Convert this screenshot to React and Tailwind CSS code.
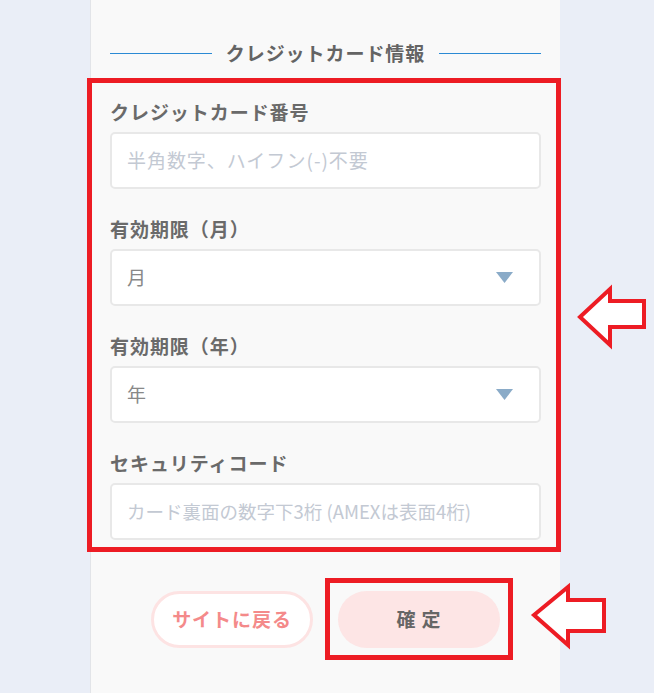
import React from "react";

const font = "font-['Noto_Sans_CJK_JP','Liberation_Sans',sans-serif]";

function Caret() {
  return (
    <svg width="17" height="11" viewBox="0 0 17 11">
      <polygon points="0,0 17,0 8.5,11" fill="#8aabc8" />
    </svg>
  );
}

function Field({ label, children }) {
  return (
    <div>
      <div className="text-[19px] leading-[24px] font-bold tracking-[0.05em] text-[#6a6a6a]">{label}</div>
      <div className="mt-2">{children}</div>
    </div>
  );
}

function TextBox({ placeholder, tight }) {
  return (
    <div className="h-[57px] bg-white border-2 border-[#e8e8e8] rounded-[5px] flex items-center pl-[15px]">
      <span className={`whitespace-nowrap text-[#c3c9d3] ${tight ? "text-[18.5px]" : "text-[19px] tracking-[0.05em]"}`}>
        {placeholder}
      </span>
    </div>
  );
}

function SelectBox({ value }) {
  return (
    <div className="h-[57px] bg-white border-2 border-[#e8e8e8] rounded-[5px] flex items-center justify-between pl-[15px] pr-[26px]">
      <span className="text-[19px] text-[#888]">{value}</span>
      <Caret />
    </div>
  );
}

export default function App() {
  return (
    <div className={`relative w-[654px] h-[693px] bg-[#eaeef7] overflow-hidden ${font}`}>
      {/* Panel */}
      <div className="ml-[90px] w-[470px] h-[693px] bg-[#f9f9f9] border-l border-[#e2e4e8]">
        {/* Section heading */}
        <div className="pt-[39px] px-[19px] flex items-center">
          <div className="flex-1 h-px bg-[#2b8ad4]" />
          <div className="mx-[14px] text-[19px] leading-[28px] font-bold tracking-[0.05em] text-[#646464]">
            クレジットカード情報
          </div>
          <div className="flex-1 h-px bg-[#2b8ad4]" />
        </div>

        {/* Card fields (highlighted) */}
        <div className="mt-[11px] -ml-[4px] w-[474px] border-[5px] border-[#ed1c24] pt-[17px] pb-[7px] pl-[18px] pr-[15px] flex flex-col gap-[28px]">
          <Field label="クレジットカード番号">
            <TextBox placeholder="半角数字、ハイフン(-)不要" />
          </Field>
          <Field label="有効期限（月）">
            <SelectBox value="月" />
          </Field>
          <Field label="有効期限（年）">
            <SelectBox value="年" />
          </Field>
          <Field label="セキュリティコード">
            <TextBox placeholder="カード裏面の数字下3桁 (AMEXは表面4桁)" tight />
          </Field>
        </div>

        {/* Buttons */}
        <div className="mt-[39px] flex justify-center gap-[25px]">
          <button className="w-[162px] h-[57px] rounded-full bg-white border-[3px] border-[#fde3e3] text-[19px] font-bold tracking-[0.05em] text-[#f48a8a]">
            サイトに戻る
          </button>
          <div className="relative">
            <button className="w-[162px] h-[57px] rounded-full bg-[#fde5e5] text-[19px] font-bold tracking-[0.05em] text-[#666]">
              確 定
            </button>
            <div className="absolute -left-[13px] -right-[13px] -top-[13px] -bottom-[12px] border-[5px] border-[#ed1c24]" />
          </div>
        </div>
      </div>

      {/* Annotation arrows */}
      <svg className="absolute left-[574px] top-[283px]" width="76" height="68" viewBox="574 283 76 68">
        <path d="M580 317 L610 289 L610 301 L644 301 L644 327 L610 327 L610 345 Z" fill="#fff" stroke="#ed1c24" strokeWidth="4" />
      </svg>
      <svg className="absolute left-[528px] top-[581px]" width="82" height="70" viewBox="528 581 82 70">
        <path d="M534 615 L568 587 L568 600 L604 600 L604 631 L568 631 L568 645 Z" fill="#fff" stroke="#ed1c24" strokeWidth="4" />
      </svg>
    </div>
  );
}
